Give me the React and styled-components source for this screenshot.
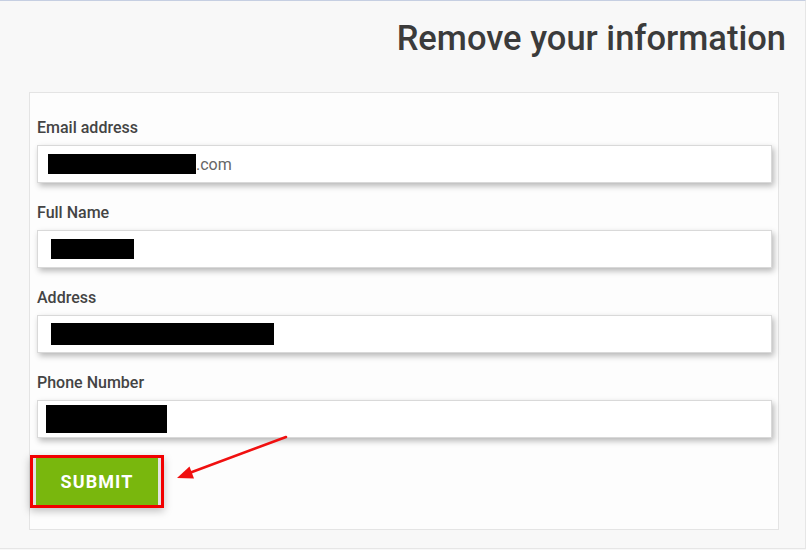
import styled, { createGlobalStyle } from 'styled-components'

const GlobalStyle = createGlobalStyle`
  html, body {
    margin: 0;
    padding: 0;
    background: #f8f8f8;
  }
  body {
    font-family: Roboto, "Liberation Sans", Arial, sans-serif;
  }
`

const fields = [
  { label: 'Email address', mask: { w: 148, h: 20, left: 10 }, suffix: '.com' },
  { label: 'Full Name', mask: { w: 83, h: 20, left: 13 } },
  { label: 'Address', mask: { w: 223, h: 22, left: 13 } },
  { label: 'Phone Number', mask: { w: 121, h: 28, left: 8 } },
]

const App = () => {
  return (
    <>
      <GlobalStyle />
      <Page>
        <Title>Remove your information</Title>
        <Card>
          {fields.map(f => (
            <Field key={f.label}>
              <Label>{f.label}</Label>
              <InputBox $pad={f.mask.left}>
                <Mask $w={f.mask.w} $h={f.mask.h} />
                {f.suffix && <Suffix>{f.suffix}</Suffix>}
              </InputBox>
            </Field>
          ))}
          <Highlight>
            <SubmitButton type="button">SUBMIT</SubmitButton>
          </Highlight>
        </Card>
        <Arrow width="806" height="550" viewBox="0 0 806 550">
          <line x1="286" y1="437" x2="188" y2="473.5" stroke="#f01010" strokeWidth="2.5" strokeLinecap="round" />
          <polygon points="177,478 194,478.5 189.5,466.5" fill="#f01010" />
        </Arrow>
      </Page>
    </>
  )
}

export default App

const Page = styled.div`
  position: relative;
  box-sizing: border-box;
  width: 806px;
  height: 549px;
  border-top: 1px solid #c6cfe2;
  border-right: 1px solid #e6e6e6;
  border-bottom: 1px solid #e6e6e6;
  padding-top: 17px;
`

const Title = styled.h1`
  margin: 0;
  padding-right: 19px;
  text-align: right;
  font-size: 34.5px;
  line-height: 40px;
  font-weight: 500;
  color: #3b3b3b;
`

const Card = styled.div`
  box-sizing: border-box;
  margin: 34px 0 0 29px;
  width: 750px;
  height: 438px;
  padding: 26px 6px 0 7px;
  background: #fdfdfd;
  border: 1px solid #e4e4e4;
  display: flex;
  flex-direction: column;
  gap: 21px;
`

const Field = styled.div`
  display: flex;
  flex-direction: column;
  gap: 8px;
`

const Label = styled.label`
  font-size: 16px;
  line-height: 18px;
  font-weight: 500;
  color: #444;
`

const InputBox = styled.div`
  box-sizing: border-box;
  height: 38px;
  display: flex;
  align-items: center;
  padding-left: ${p => p.$pad}px;
  background: #fff;
  border: 1px solid #d9d9d9;
  box-shadow: 2px 3px 6px rgba(0, 0, 0, 0.28);
`

const Mask = styled.span`
  display: inline-block;
  width: ${p => p.$w}px;
  height: ${p => p.$h}px;
  background: #000;
`

const Suffix = styled.span`
  font-size: 16px;
  color: #666;
  margin-top: 1px;
`

const Highlight = styled.div`
  align-self: flex-start;
  margin: -4px 0 0 -7px;
  display: flex;
  padding: 0 3px;
  background: #e2e2e2;
  border: 3px solid #f20000;
  box-shadow: 0 3px 8px rgba(0, 0, 0, 0.25);
`

const SubmitButton = styled.button`
  width: 122px;
  height: 47px;
  border: none;
  background: #79b70d;
  color: #fff;
  font-family: Roboto, "Liberation Sans", Arial, sans-serif;
  font-size: 18px;
  font-weight: 700;
  letter-spacing: 1.1px;
  cursor: pointer;
`

const Arrow = styled.svg`
  position: absolute;
  left: 0;
  top: -1px;
  pointer-events: none;
`
